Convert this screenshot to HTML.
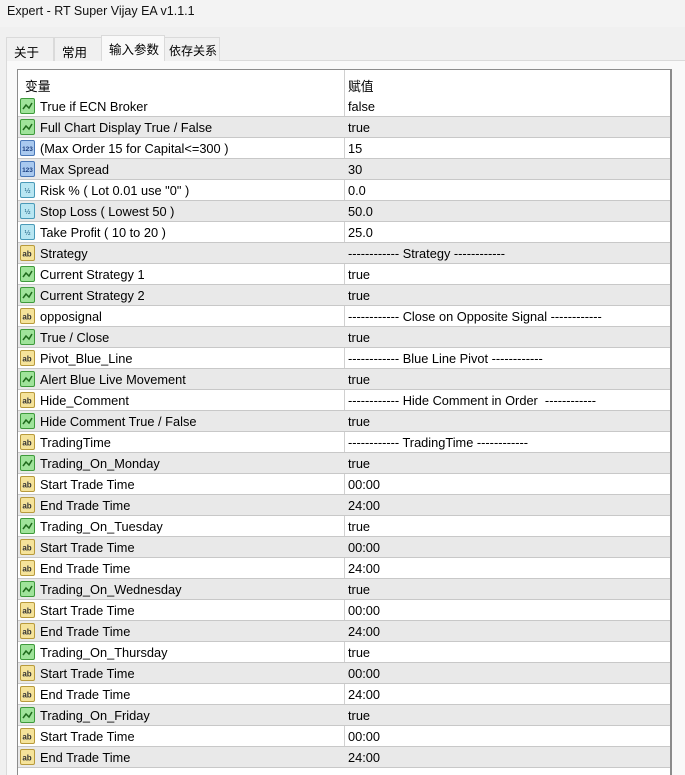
<!DOCTYPE html>
<html><head><meta charset="utf-8"><style>
*{margin:0;padding:0;box-sizing:border-box}
html,body{overflow:hidden}
body{width:685px;height:775px;background:#f0f0f0;font-family:"Liberation Sans","Noto Sans CJK SC",sans-serif;font-size:12.8px;color:#000;position:relative}
.title{position:absolute;left:0;top:0;width:685px;height:27px;background:#f3f3f3;padding:4px 0 0 7px;font-size:12.5px;color:#111}
.tab{position:absolute;top:37px;height:24px;border:1px solid #dadada;border-bottom:none;background:#f0f0f0;padding:4px 0 0 7px;font-size:12.5px;white-space:nowrap;overflow:hidden}
.tab.act{top:35px;height:26px;background:#f9f9f9;z-index:2;padding-top:3px}
.panel{position:absolute;left:6px;top:60px;width:690px;height:720px;background:#f9f9f9;border:1px solid #dadada}
.tbl{position:absolute;left:17px;top:69px;width:655px;height:720px;background:#fff;border:1px solid #8c8c8c;border-right:2px solid #8c8c8c}
.hdr{position:absolute;left:0;top:0;width:653px;height:26px}
.hdr span{position:absolute;top:6px}
.vline{position:absolute;left:326px;top:0;width:1px;height:697px;background:#d0d0d0}
.row{position:absolute;left:0;width:652px;height:21px;border-bottom:1px solid #c8c8c8}
.row.g{background:#e9e9e9}
.row svg{position:absolute;left:2px;top:2px}
.row .n{position:absolute;left:22px;top:3px;white-space:nowrap}
.row .v{position:absolute;left:330px;top:3px;white-space:pre}
</style></head><body>
<div class="title">Expert - RT Super Vijay EA v1.1.1</div>
<div class="panel"></div>
<div class="tab" style="left:6px;width:48px">关于</div>
<div class="tab" style="left:54px;width:48px">常用</div>
<div class="tab act" style="left:101px;width:64px">输入参数</div>
<div class="tab" style="left:164px;width:56px;padding-left:4px;font-size:12px">依存关系</div>
<div class="tbl">
<div class="hdr"><span style="left:7px">变量</span><span style="left:330px">赋值</span></div>
<div class="vline"></div>
<div id="rows"></div>
</div>
<script>
var R=[["b","True if ECN Broker","false"],["b","Full Chart Display True / False","true"],["i","(Max Order 15 for Capital<=300 )","15"],["i","Max Spread","30"],["d","Risk % ( Lot 0.01 use \"0\" )","0.0"],["d","Stop Loss ( Lowest 50 )","50.0"],["d","Take Profit ( 10 to 20 )","25.0"],["s","Strategy","------------ Strategy ------------"],["b","Current Strategy 1","true"],["b","Current Strategy 2","true"],["s","opposignal","------------ Close on Opposite Signal ------------"],["b","True / Close","true"],["s","Pivot_Blue_Line","------------ Blue Line Pivot ------------"],["b","Alert Blue Live Movement","true"],["s","Hide_Comment","------------ Hide Comment in Order  ------------"],["b","Hide Comment True / False","true"],["s","TradingTime","------------ TradingTime ------------"]];
["Monday","Tuesday","Wednesday","Thursday","Friday"].forEach(function(d){R.push(["b","Trading_On_"+d,"true"],["s","Start Trade Time","00:00"],["s","End Trade Time","24:00"]);});
var I={
b:'<rect x="0.5" y="0.5" width="14" height="15" rx="1.5" fill="#9fe39a" stroke="#3f9a3c"/><path d="M3 11 L6 7 L9 10 L12 5" stroke="#1f6a1c" stroke-width="1.5" fill="none"/>',
i:'<rect x="0.5" y="0.5" width="14" height="15" rx="1.5" fill="#a9c9ef" stroke="#4a78b8"/><text x="7.5" y="11" font-size="6.5" text-anchor="middle" fill="#1c3f80" font-family="Liberation Sans" font-weight="bold">123</text>',
d:'<rect x="0.5" y="0.5" width="14" height="15" rx="1.5" fill="#b8e6f2" stroke="#4a9ab8"/><text x="7.5" y="11" font-size="7" text-anchor="middle" fill="#1c5f80" font-family="Liberation Sans">½</text>',
s:'<rect x="0.5" y="0.5" width="14" height="15" rx="1.5" fill="#f5e39a" stroke="#b89a3c"/><text x="7" y="11.5" font-size="8" text-anchor="middle" fill="#333" font-family="Liberation Sans" font-weight="bold">ab</text>'};
var h='';R.forEach(function(r,k){h+='<div class="row'+(k%2?' g':'')+'" style="top:'+(26+k*21)+'px"><svg width="16" height="17">'+I[r[0]]+'</svg><span class="n"></span><span class="v"></span></div>';});
var c=document.getElementById('rows');c.innerHTML=h;
var rs=c.querySelectorAll('.row');R.forEach(function(r,k){rs[k].querySelector('.n').textContent=r[1];rs[k].querySelector('.v').textContent=r[2];});
</script>
</body></html>
